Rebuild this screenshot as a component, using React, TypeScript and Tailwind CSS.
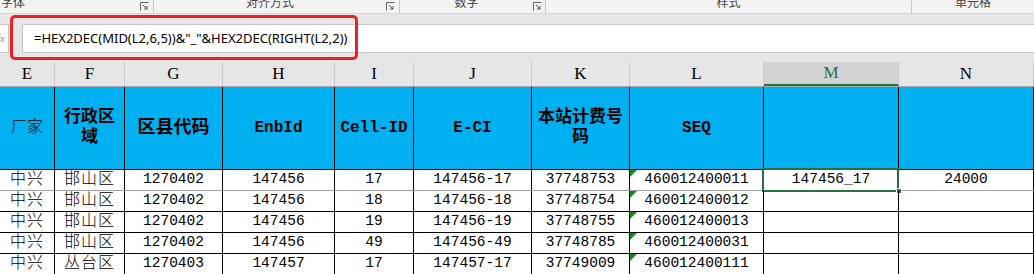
import React from "react";

type Col = {
  key: string;
  width: string;
  title: React.ReactNode;
  titleClass: string;
};

const serifCjk = "font-['Liberation_Mono','Noto_Sans_CJK_SC',monospace]";

/**
 * Columns E..N as they are shown in the sheet
 */
const columns: Col[] = [
  { key: "E", width: "w-[55px]", title: "厂家", titleClass: "text-[16px] font-light" },
  {
    key: "F",
    width: "w-[70px]",
    title: (
      <>
        行政区
        <br />域
      </>
    ),
    titleClass: "text-[17px] font-bold leading-[20px]",
  },
  { key: "G", width: "w-[98px]", title: "区县代码", titleClass: "text-[18px] font-bold" },
  { key: "H", width: "w-[112px]", title: "EnbId", titleClass: "text-[16px] font-bold" },
  { key: "I", width: "w-[79px]", title: "Cell-ID", titleClass: "text-[16px] font-bold" },
  { key: "J", width: "w-[118px]", title: "E-CI", titleClass: "text-[16px] font-bold" },
  {
    key: "K",
    width: "w-[98px]",
    title: (
      <>
        本站计费号
        <br />码
      </>
    ),
    titleClass: "text-[17px] font-bold leading-[20px]",
  },
  { key: "L", width: "w-[134px]", title: "SEQ", titleClass: "text-[16px] font-bold" },
  { key: "M", width: "w-[135px]", title: "", titleClass: "" },
  { key: "N", width: "w-[135px]", title: "", titleClass: "" },
];

const rows: string[][] = [
  ["中兴", "邯山区", "1270402", "147456", "17", "147456-17", "37748753", "460012400011", "147456_17", "24000"],
  ["中兴", "邯山区", "1270402", "147456", "18", "147456-18", "37748754", "460012400012", "", ""],
  ["中兴", "邯山区", "1270402", "147456", "19", "147456-19", "37748755", "460012400013", "", ""],
  ["中兴", "邯山区", "1270402", "147456", "49", "147456-49", "37748785", "460012400031", "", ""],
  ["中兴", "丛台区", "1270403", "147457", "17", "147457-17", "37749009", "460012400111", "", ""],
];

/**
 * Little dialog launcher in the ribbon group label
 */
const Launcher: React.FC = () => (
  <svg width="9" height="9" viewBox="0 0 9 9" className="shrink-0">
    <path d="M0.5 8.5V0.5H8.5" fill="none" stroke="#666" strokeWidth="1" />
    <path d="M3 3L7 7M7 4V7H4" fill="none" stroke="#555" strokeWidth="1" />
  </svg>
);

const RibbonLabels: React.FC = () => (
  <div className="flex h-[14px] overflow-hidden border-b border-[#d6d6d6] bg-[#f3f3f3] font-['Noto_Sans_CJK_SC',sans-serif] text-[12px] leading-none text-[#444]">
    <div className="flex w-[154px] items-start justify-between border-r border-[#c8c8c8] pr-[4px]">
      <span className="-mt-[4px] pl-[1px]">字体</span>
      <span className="mt-[2px]">
        <Launcher />
      </span>
    </div>
    <div className="flex w-[246px] items-start border-r border-[#c8c8c8] pr-[4px]">
      <span className="-mt-[4px] flex-1 text-center">对齐方式</span>
      <span className="mt-[2px]">
        <Launcher />
      </span>
    </div>
    <div className="flex w-[146px] items-start border-r border-[#c8c8c8] pr-[3px]">
      <span className="-mt-[4px] flex-1 text-center">数字</span>
      <span className="mt-[2px]">
        <Launcher />
      </span>
    </div>
    <div className="flex w-[366px] items-start justify-center border-r border-[#c8c8c8]">
      <span className="-mt-[4px]">样式</span>
    </div>
    <div className="flex flex-1 items-start justify-center">
      <span className="-mt-[4px]">单元格</span>
    </div>
  </div>
);

const FormulaBar: React.FC = () => (
  <div className="relative h-[48px] bg-[#e6e6e6] pt-[10px]">
    <div className="flex h-[29px]">
      <div className="flex w-[9px] items-center overflow-hidden border-y border-r border-[#c6c6c6] bg-white">
        <span className="-ml-[3px] font-['Liberation_Serif',serif] text-[11px] italic text-[#888]">fx</span>
      </div>
      <div className="w-[13px]" />
      <div className="flex flex-1 items-center border-y border-l border-[#c6c6c6] bg-white pl-[11px] font-['Noto_Sans',sans-serif] text-[13px] text-black">
        =HEX2DEC(MID(L2,6,5))&amp;"_"&amp;HEX2DEC(RIGHT(L2,2))
      </div>
    </div>
    {/* red annotation box drawn over the formula */}
    <div className="absolute left-[10px] top-[1px] h-[45px] w-[348px] rounded-[5px] border-[3px] border-[#ef1f1f]" />
  </div>
);

const ColumnHeaders: React.FC = () => (
  <div className="flex h-[25px] border-b border-[#a8a8a8] bg-[#e6e6e6] font-['Liberation_Serif',serif] text-[17px]">
    {columns.map((c) => (
      <div
        key={c.key}
        className={`${c.width} flex items-center justify-center border-r border-[#c8c8c8] ${
          c.key === "M" ? "border-b-2 border-b-[#217346] bg-[#d2d2d2] text-[#217346]" : "text-black"
        }`}
      >
        {c.key}
      </div>
    ))}
  </div>
);

const TitleRow: React.FC = () => (
  <div className="flex h-[83px] border-b border-black bg-[#00b0f0] text-black">
    {columns.map((c) => (
      <div
        key={c.key}
        className={`${c.width} flex items-center justify-center border-r border-black text-center ${serifCjk} ${c.titleClass}`}
      >
        <span>{c.title}</span>
      </div>
    ))}
  </div>
);

const DataRow: React.FC<{ cells: string[]; index: number }> = ({ cells, index }) => (
  <div className={`flex h-[21px] border-b ${index === 0 ? "border-[#a0a0a0]" : "border-black"} bg-white`}>
    {cells.map((value, i) => {
      const col = columns[i];
      const isCjk = i < 2;
      const selected = index === 0 && col.key === "M";
      return (
        <div
          key={col.key}
          className={`${col.width} relative flex items-center justify-center border-r border-black ${serifCjk} ${
            isCjk ? "text-[16px] font-light tracking-[1px]" : "text-[14.5px]"
          } text-black`}
        >
          {col.key === "L" && (
            <span className="absolute left-0 top-0 h-0 w-0 border-r-[7px] border-t-[7px] border-r-transparent border-t-[#148c14]" />
          )}
          {value}
          {selected && (
            <>
              <span className="absolute -left-[2px] -top-[2px] h-[24px] w-[137px] border-2 border-[#217346]" />
              <span className="absolute -bottom-[4px] -right-[4px] h-[6px] w-[6px] border border-white bg-[#217346]" />
            </>
          )}
        </div>
      );
    })}
  </div>
);

export default function App() {
  return (
    <div className="h-[274px] w-[1034px] overflow-hidden bg-white">
      <RibbonLabels />
      <FormulaBar />
      <ColumnHeaders />
      <TitleRow />
      {rows.map((r, i) => (
        <DataRow key={i} cells={r} index={i} />
      ))}
    </div>
  );
}
